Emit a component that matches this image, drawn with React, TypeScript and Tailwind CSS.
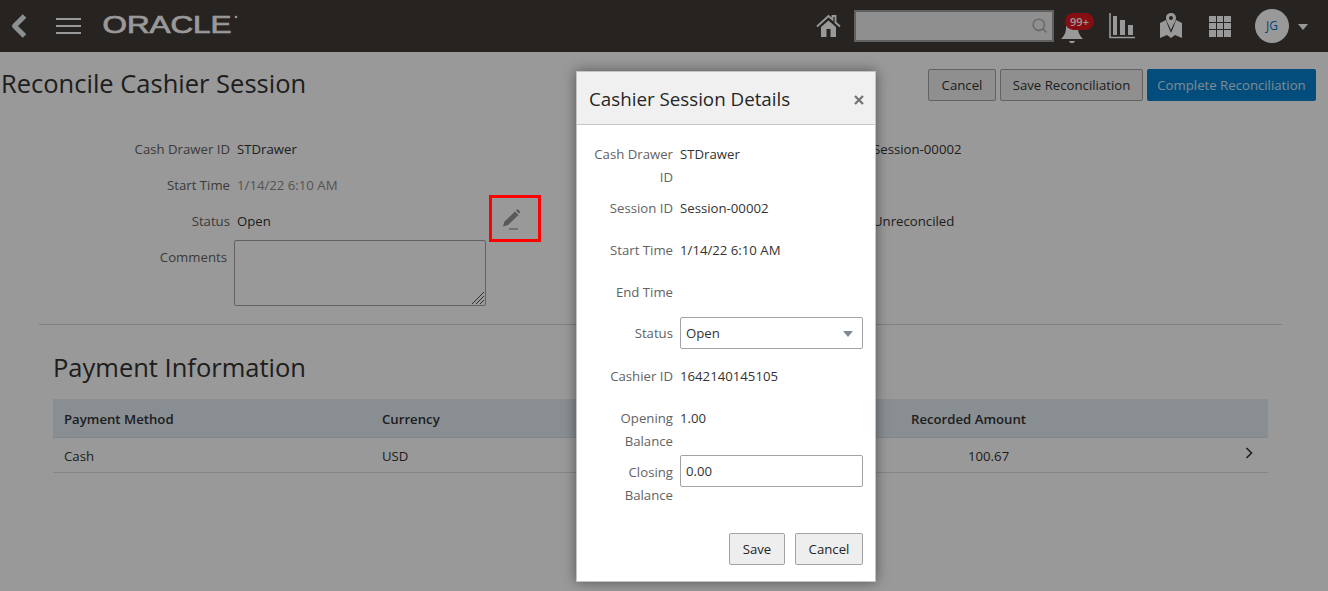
import { Search } from "lucide-react";

const font = { fontFamily: '"Open Sans", "Noto Sans", sans-serif' };

function TopBar() {
  return (
    <header className="flex h-[52px] items-center bg-[#413b38] text-white">
      <svg width="18" height="26" viewBox="0 0 18 26" className="ml-[10px]">
        <path d="M14.500 3 L4.500 13 L14.500 23" fill="none" stroke="#e8f0f6" strokeWidth="5" strokeLinejoin="round" />
      </svg>
      <div className="ml-[28px] flex w-[25px] flex-col gap-[5px]">
        <div className="h-[2px] bg-white" />
        <div className="h-[2px] bg-white" />
        <div className="h-[2px] bg-white" />
      </div>
      <svg width="140" height="24" viewBox="0 0 140 24" className="ml-[21px] mt-[-4px]">
        <text x="0.500" y="20.500" textLength="129" lengthAdjust="spacingAndGlyphs" fontSize="24" fontFamily="Liberation Sans, sans-serif" fill="#ffffff" stroke="#ffffff" strokeWidth="0.700">
          ORACLE
        </text>
        <circle cx="134" cy="5" r="1.300" fill="#ffffff" />
      </svg>
      <svg width="25" height="24" viewBox="0 0 25 24" className="ml-[574px]">
        <path d="M1 12.500 L12.500 2 L16.500 5.500 V2 H19.500 V8.500 L24 12.500" fill="none" stroke="#fff" strokeWidth="1.800" />
        <path fillRule="evenodd" d="M5 13 L12.500 6.500 L20 13 V23 H5 Z M10.500 15 V23 H14.500 V15 Z" fill="#fff" />
      </svg>
      <div className="relative ml-[13px] h-[32px] w-[200px] border-2 border-[#a0a0a0] bg-[#eeeeee]">
        <Search size={17} strokeWidth={2} className="absolute right-[4px] top-[5px] text-[#aaaaaa]" />
      </div>
      <div className="relative ml-[7px] h-[40px] w-[36px]">
        <svg width="22" height="26" viewBox="0 0 22 26" className="absolute left-0 top-[13px]">
          <path d="M11 2 C15 2 17 5 17 9 C17 14 19 17 22 20 H0 C3 17 5 14 5 9 C5 5 7 2 11 2 Z" fill="#fff" />
          <path d="M8 22 H14 C13 25 9 25 8 22 Z" fill="#fff" />
        </svg>
        <span className="absolute left-[4px] top-[7px] flex h-[17px] w-[29px] items-center justify-center rounded-full bg-[#e0181f] text-[11px] font-semibold leading-none text-white">
          99+
        </span>
      </div>
      <svg width="26" height="26" viewBox="0 0 26 26" className="ml-[12px]">
        <path d="M1 0 V24.500 H26" fill="none" stroke="#fff" strokeWidth="1.600" />
        <path d="M4 3 H8 V22 H4 Z M11 7 H16 V22 H11 Z M19 12 H24 V22 H19 Z" fill="#fff" />
      </svg>
      <svg width="22" height="26" viewBox="0 0 22 26" className="ml-[25px]">
        <path d="M0 10 L6 7 L8 13 L11 20 L14 13 L16 7 L22 10 V25 L15 22 L11 25 L7 22 L0 25 Z" fill="#fff" />
        <path fillRule="evenodd" d="M11 0 C14.500 0 16 2.500 16 5 C16 8 13 12 11 17 C9 12 6 8 6 5 C6 2.500 7.500 0 11 0 Z M11 3 A2 2 0 1 0 11 7 A2 2 0 1 0 11 3 Z" fill="#fff" />
      </svg>
      <div className="ml-[27px] grid h-[21px] w-[22px] grid-cols-3 grid-rows-3 gap-[1px]">
        {Array.from({ length: 9 }).map((_, i) => (
          <div key={i} className="bg-white" />
        ))}
      </div>
      <div className="ml-[24px] flex h-[34px] w-[34px] items-center justify-center rounded-full bg-white text-[12px] text-[#0572ce]">
        JG
      </div>
      <div className="ml-[9px] mt-[2px] h-0 w-0 border-x-[5px] border-t-[6px] border-x-transparent border-t-white" />
    </header>
  );
}

function InfoRow({ label, value, muted }: { label: string; value: string; muted?: boolean }) {
  return (
    <div className="flex h-[36px] items-center pt-[2px]">
      <div className="w-[230px] text-right text-[#636363]">{label}</div>
      <div className={muted ? "ml-[7px] text-[#8b8b8b]" : "ml-[7px] text-[#333333]"}>{value}</div>
    </div>
  );
}

function PageContent() {
  return (
    <main>
      <div className="flex h-[66px] items-start justify-between pr-[12px] pt-[17px]">
        <h1 className="mt-[-1px] pl-[1px] text-[25.500px] leading-[30px] text-[#333333]">Reconcile Cashier Session</h1>
        <div className="flex">
          <button className="h-[32px] w-[68px] rounded-[2px] border border-[#a3a3a3] bg-[#eeeeee] pt-[2px] text-[#333333]">Cancel</button>
          <button className="ml-[4px] h-[32px] w-[143px] rounded-[2px] border border-[#a3a3a3] bg-[#eeeeee] pt-[2px] text-[#333333]">Save Reconciliation</button>
          <button className="ml-[4px] h-[32px] w-[169px] rounded-[2px] bg-[#0480ce] pt-[2px] text-white/80">Complete Reconciliation</button>
        </div>
      </div>

      <div className="flex pt-[13px]">
        <div className="w-[873px]">
          <InfoRow label="Cash Drawer ID" value="STDrawer" />
          <InfoRow label="Start Time" value="1/14/22 6:10 AM" muted />
          <InfoRow label="Status" value="Open" />
          <div className="flex pt-[1px]">
            <div className="w-[227px] pt-[8px] text-right text-[#636363]">Comments</div>
            <div className="relative ml-[7px] h-[66px] w-[252px] rounded-[2px] border border-[#a3a3a3]">
              <svg width="14" height="14" viewBox="0 0 14 14" className="absolute bottom-0 right-0">
                <path d="M1 13 L13 1 M5 13 L13 5 M9 13 L13 9" stroke="#555555" strokeWidth="1" />
              </svg>
            </div>
          </div>
        </div>
        <div className="text-[#333333]">
          <div className="flex h-[36px] items-center pt-[2px]">Session-00002</div>
          <div className="h-[36px]" />
          <div className="flex h-[36px] items-center pt-[2px]">Unreconciled</div>
        </div>
      </div>

      <div className="ml-[39px] mr-[46px] mt-[18px] border-t border-[#d6d6d6]" />

      <section className="ml-[53px] mr-[60px] mt-[24px]">
        <h2 className="text-[25.500px] leading-[36px] text-[#333333]">Payment Information</h2>
        <div className="mt-[14px]">
          <div className="flex h-[39px] items-center border-b border-[#d6dfe6] bg-[#e4edf3] pt-[3px] font-semibold text-[#333333]">
            <div className="w-[329px] pl-[11px]">Payment Method</div>
            <div className="w-[529px]">Currency</div>
            <div>Recorded Amount</div>
          </div>
          <div className="relative flex h-[35px] items-center border-b border-[#d6dfe6] pt-[4px] text-[#333333]">
            <div className="w-[329px] pl-[11px]">Cash</div>
            <div className="w-[586px]">USD</div>
            <div>100.67</div>
            <svg width="8" height="12" viewBox="0 0 8 12" className="absolute right-[15px] top-[9px]">
              <path d="M1.500 1 L6.500 6 L1.500 11" fill="none" stroke="#333333" strokeWidth="1.600" />
            </svg>
          </div>
        </div>
      </section>
    </main>
  );
}

function ModalLabel({ children }: { children: React.ReactNode }) {
  return <div className="w-[96px] shrink-0 pl-[8px] text-right leading-[23px] text-[#636363]">{children}</div>;
}

function SessionModal() {
  return (
    <div className="absolute left-[576px] top-[71px] h-[511px] w-[300px] border border-[#c4c4c4] bg-white shadow-[0_0_12px_rgba(0,0,0,0.45)]">
      <div className="flex h-[53px] items-center justify-between border-b border-[#c8c8c8] bg-[#f0f0f0] pl-[12px] pr-[11px]">
        <div className="pt-[3px] text-[18.750px] text-[#252525]">Cashier Session Details</div>
        <svg width="10" height="10" viewBox="0 0 10 10" className="mt-[3px]">
          <path d="M1 1 L9 9 M9 1 L1 9" stroke="#727272" strokeWidth="2.200" />
        </svg>
      </div>
      <div className="flex flex-col pr-[12px]">
        <div className="mt-[18px] flex gap-[7px]">
          <ModalLabel>Cash Drawer ID</ModalLabel>
          <div className="leading-[23px] text-[#333333]">STDrawer</div>
        </div>
        <div className="mt-[8px] flex gap-[7px]">
          <ModalLabel>Session ID</ModalLabel>
          <div className="leading-[23px] text-[#333333]">Session-00002</div>
        </div>
        <div className="mt-[19px] flex gap-[7px]">
          <ModalLabel>Start Time</ModalLabel>
          <div className="leading-[23px] text-[#333333]">1/14/22 6:10 AM</div>
        </div>
        <div className="mt-[19px] flex h-[23px] gap-[7px]">
          <ModalLabel>End Time</ModalLabel>
        </div>
        <div className="mt-[13px] flex items-center gap-[7px]">
          <ModalLabel>Status</ModalLabel>
          <div className="flex h-[32px] flex-1 items-center justify-between rounded-[2px] border border-[#a3a3a3] pl-[5px] pr-[9px] pt-[2px] text-[#333333]">
            Open
            <div className="h-0 w-0 border-x-[5px] border-t-[6px] border-x-transparent border-t-[#7d8a96]" />
          </div>
        </div>
        <div className="mt-[16px] flex gap-[7px]">
          <ModalLabel>Cashier ID</ModalLabel>
          <div className="leading-[23px] text-[#333333]">1642140145105</div>
        </div>
        <div className="mt-[19px] flex gap-[7px]">
          <ModalLabel>Opening Balance</ModalLabel>
          <div className="leading-[23px] text-[#333333]">1.00</div>
        </div>
        <div className="mt-[2px] flex gap-[7px]">
          <div className="pt-[6px]">
            <ModalLabel>Closing Balance</ModalLabel>
          </div>
          <div className="flex h-[32px] flex-1 items-center rounded-[2px] border border-[#a3a3a3] pl-[5px] pt-[2px] text-[#333333]">0.00</div>
        </div>
        <div className="mt-[26px] flex justify-end gap-[10px]">
          <button className="h-[32px] w-[56px] rounded-[2px] border border-[#a3a3a3] bg-[#eeeeee] pt-[2px] text-[#252525]">Save</button>
          <button className="h-[32px] w-[68px] rounded-[2px] border border-[#a3a3a3] bg-[#eeeeee] pt-[2px] text-[#252525]">Cancel</button>
        </div>
      </div>
    </div>
  );
}

export default function App() {
  return (
    <div className="relative h-[591px] w-[1328px] overflow-hidden bg-white text-[13.200px]" style={font}>
      <TopBar />
      <PageContent />
      <div className="absolute inset-0 bg-black/40" />
      <SessionModal />
      <div className="absolute left-[489px] top-[195px] flex h-[47px] w-[52px] items-center justify-center border-[3px] border-[#ff0000]">
        <svg width="22" height="22" viewBox="0 0 22 22" className="mr-[6px]">
          <path d="M2 18.500 L3.500 13.500 L14 3.500 L17.500 7 L7 17 Z" fill="#595959" />
          <path d="M15 2.500 L16.500 1 L19.500 4 L18 5.500 Z" fill="#595959" />
          <path d="M8 21 H17" stroke="#595959" strokeWidth="1.200" />
        </svg>
      </div>
    </div>
  );
}
